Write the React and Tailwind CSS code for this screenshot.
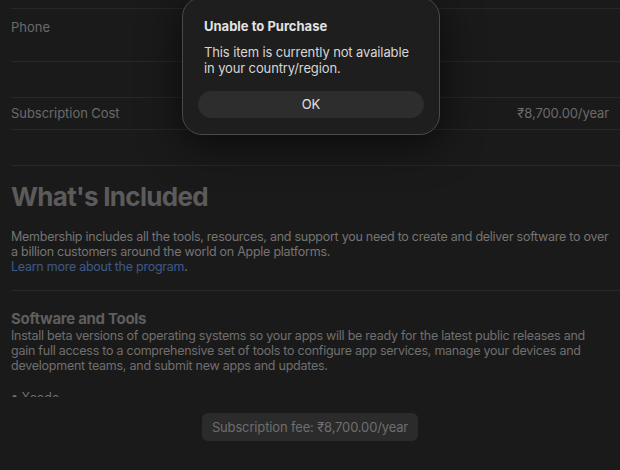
export default function App() {
  return (
    <div className="relative h-[470px] w-[620px] overflow-hidden bg-[#1b1a1a] font-['Inter',sans-serif] text-[13px] leading-[15px] text-[#747474]">
      <div className="h-[397px] overflow-hidden pl-[11px]">
        <div className="h-[9px] border-b border-[#282727]" />
        <div className="h-[53px] border-b border-[#282727] pt-[10px] leading-[16px] text-[#6a6a6a]">Phone</div>
        <div className="h-[36px] border-b border-[#282727]" />
        <div className="flex h-[32px] items-center justify-between border-b border-[#282727] pr-[11px] text-[#6a6a6a]">
          <span className="tracking-[-0.05px]">Subscription Cost</span>
          <span className="tracking-[-0.1px]">₹8,700.00/year</span>
        </div>
        <div className="h-[36px] border-b border-[#282727]" />

        <h1 className="pt-[15px] text-[26px] font-bold leading-[32px] tracking-[-0.7px] text-[#5b5b5b]">What's Included</h1>
        <p className="mt-[16px] pr-[4px] text-[12.5px] tracking-[-0.26px]">
          Membership includes all the tools, resources, and support you need to create and deliver software to over a billion customers around the world on Apple platforms.
          <br />
          <a href="#" className="text-[#3c5a8c]">Learn more about the program</a>.
        </p>
        <div className="mt-[16px] border-t border-[#282727]" />

        <h2 className="mt-[19px] text-[15px] font-bold leading-[18px] tracking-[-0.3px] text-[#5e5e5e]">Software and Tools</h2>
        <p className="pr-[11px] text-[12.5px] tracking-[-0.25px] text-[#6f6f6f]">
          Install beta versions of operating systems so your apps will be ready for the latest public releases and gain full access to a comprehensive set of tools to configure app services, manage your devices and development teams, and submit new apps and updates.
        </p>
        <ul className="mt-[17px] text-[12.5px] text-[#6f6f6f]">
          <li>• Xcode</li>
        </ul>
      </div>

      <div className="flex h-[73px] items-start justify-center pt-[16px]">
        <div className="flex h-[28px] items-center rounded-[6px] bg-[#2c2b2b] px-[10px] tracking-[-0.15px] text-[#6e6e6e]">
          Subscription fee: ₹8,700.00/year
        </div>
      </div>

      <div className="absolute left-[182px] top-[-3px] w-[258px] rounded-[20px] border border-[#4b4a4a] bg-[#1f1e1e] px-[15px] pb-[16px] pt-[20px] shadow-[0_8px_40px_rgba(0,0,0,0.65)]">
        <div className="px-[6px] text-[13px] font-bold leading-[16px] text-[#e2e2e2]">Unable to Purchase</div>
        <p className="mt-[10px] px-[6px] leading-[16px] tracking-[-0.12px] text-[#d6d6d6]">
          This item is currently not available in your country/region.
        </p>
        <button className="mt-[15px] flex h-[27px] w-full items-center justify-center rounded-full bg-[#2e2d2d] text-[13px] text-[#e2e2e2]">
          OK
        </button>
      </div>
    </div>
  )
}
